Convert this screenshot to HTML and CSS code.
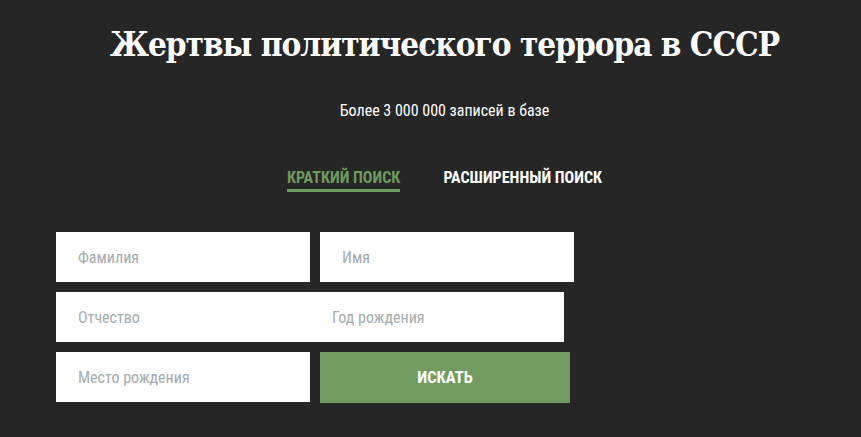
FILE: index.html
```html
<!DOCTYPE html>
<html lang="ru">
<head>
<meta charset="utf-8">
<title>Жертвы политического террора в СССР</title>
<link rel="stylesheet" href="styles.css">
</head>
<body>
<div class="page">
  <h1 class="title">Жертвы политического террора в СССР</h1>
  <p class="subtitle">Более 3 000 000 записей в базе</p>
  <div class="tabs">
    <span class="tab tab-active">КРАТКИЙ ПОИСК</span>
    <span class="tab">РАСШИРЕННЫЙ ПОИСК</span>
  </div>
  <form class="form">
    <div class="row">
      <div class="field">Фамилия</div>
      <div class="field">Имя</div>
    </div>
    <div class="row row-joined">
      <div class="field">Отчество</div>
      <div class="field">Год рождения</div>
    </div>
    <div class="row">
      <div class="field">Место рождения</div>
      <div class="button">ИСКАТЬ</div>
    </div>
  </form>
</div>
</body>
</html>
```
FILE: styles.css
```css
html, body {
  margin: 0;
  padding: 0;
  background: #262626;
}
.page {
  width: 861px;
  height: 437px;
  overflow: hidden;
  font-family: "Roboto Condensed", "Liberation Sans Narrow", "Roboto", sans-serif;
}
.title {
  margin: 0;
  padding: 22px 0 0 28px;
  text-align: center;
  font-family: "DejaVu Serif Condensed", "DejaVu Serif", serif;
  font-weight: bold;
  font-size: 33px;
  line-height: 46px;
  color: #ffffff;
  letter-spacing: -1px;
}
.subtitle {
  margin: 33px 0 0 0;
  padding-left: 28px;
  text-align: center;
  color: #ffffff;
  font-size: 16px;
  line-height: 20px;
}
.tabs {
  display: flex;
  justify-content: center;
  gap: 43px;
  margin-top: 48px;
  padding-left: 28px;
}
.tab {
  font-weight: bold;
  font-size: 16px;
  line-height: 18px;
  color: #ffffff;
  padding-bottom: 2px;
  border-bottom: 3px solid transparent;
}
.tab-active {
  color: #6f9a5e;
  border-bottom-color: #6f9a5e;
}
.form {
  margin: 40px 0 0 56px;
  display: flex;
  flex-direction: column;
  gap: 10px;
}
.row {
  display: flex;
  gap: 10px;
}
.row-joined {
  gap: 0;
}
.field {
  width: 254px;
  height: 50px;
  box-sizing: border-box;
  background: #ffffff;
  padding-left: 22px;
  display: flex;
  align-items: center;
  font-size: 16px;
  color: #a4abae;
}
.button {
  width: 250px;
  height: 51px;
  background: #729b62;
  color: #ffffff;
  font-weight: bold;
  font-size: 16.5px;
  display: flex;
  align-items: center;
  justify-content: center;
}
```
